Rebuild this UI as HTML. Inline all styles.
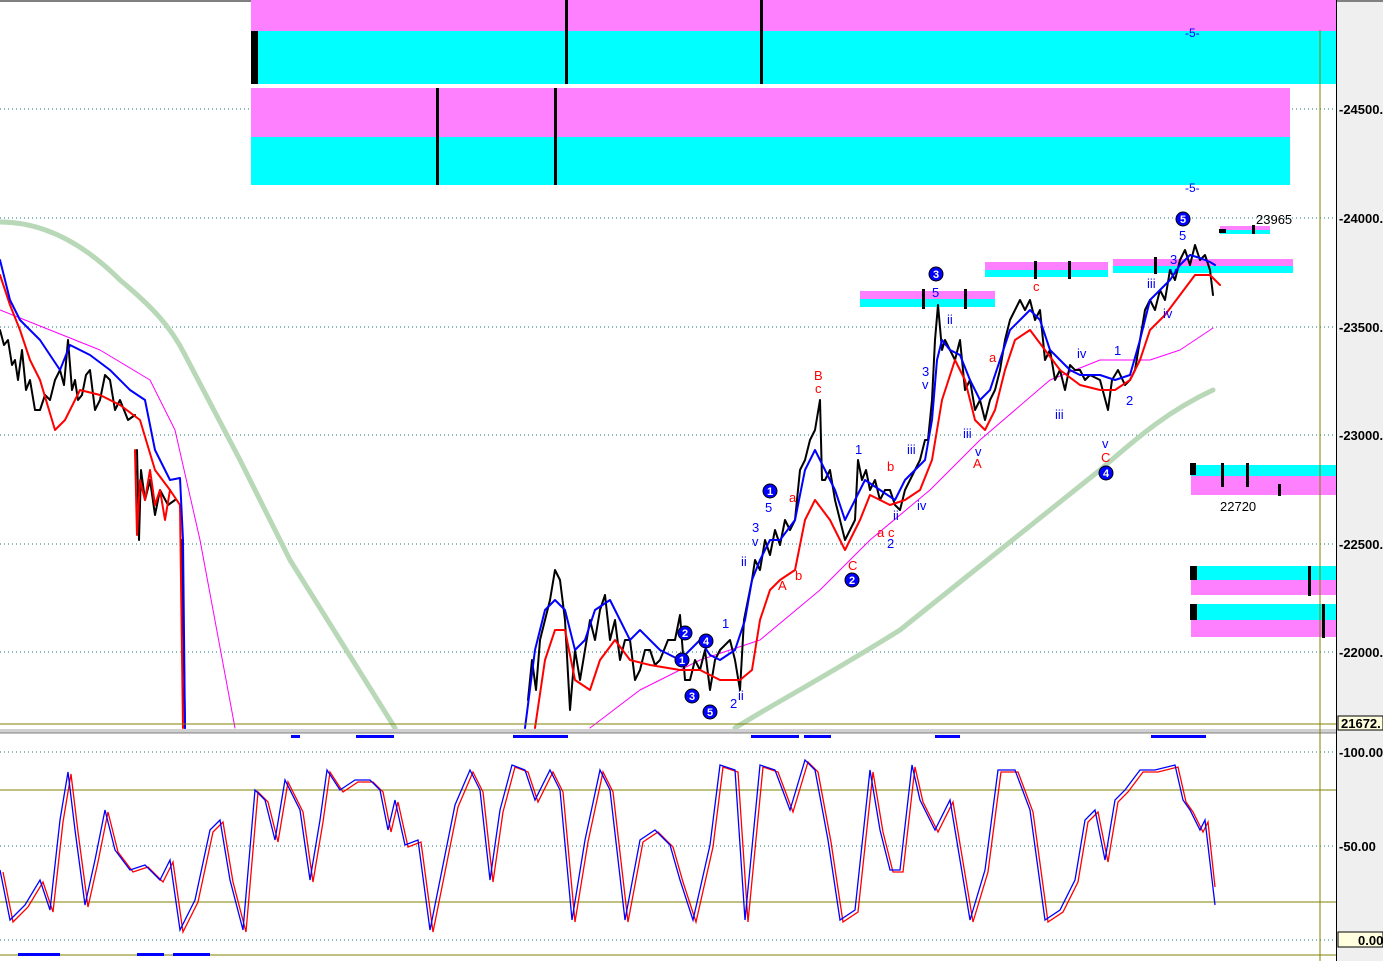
<!DOCTYPE html>
<html><head><meta charset="utf-8"><style>
html,body{margin:0;padding:0;background:#fff;}
svg{display:block;font-family:"Liberation Sans",sans-serif;}
</style></head><body>
<svg width="1383" height="961" viewBox="0 0 1383 961" xmlns="http://www.w3.org/2000/svg">
<rect x="0" y="0" width="1383" height="961" fill="#fff"/>
<rect x="1337" y="0" width="46" height="961" fill="#efefef"/>
<line x1="0" y1="1" x2="1383" y2="1" stroke="#808080" stroke-width="2"/>
<g stroke="#1a7a7a" stroke-width="1" stroke-dasharray="1,3">
<line x1="0" y1="109" x2="1336" y2="109"/><line x1="0" y1="218" x2="1336" y2="218"/>
<line x1="0" y1="327" x2="1336" y2="327"/><line x1="0" y1="435" x2="1336" y2="435"/>
<line x1="0" y1="544" x2="1336" y2="544"/><line x1="0" y1="652" x2="1336" y2="652"/>
<line x1="0" y1="752" x2="1336" y2="752"/><line x1="0" y1="846" x2="1336" y2="846"/>
<line x1="0" y1="940" x2="1336" y2="940"/>
</g>
<rect x="251" y="0" width="1085" height="31" fill="#ff80ff"/>
<rect x="251" y="31" width="1085" height="53" fill="#00ffff"/>
<rect x="251" y="31" width="7" height="53" fill="#000"/>
<rect x="565" y="0" width="3" height="84" fill="#000"/>
<rect x="760" y="0" width="3" height="84" fill="#000"/>
<rect x="251" y="88" width="1039" height="49" fill="#ff80ff"/>
<rect x="251" y="137" width="1039" height="48" fill="#00ffff"/>
<rect x="436" y="88" width="3" height="97" fill="#000"/>
<rect x="554" y="88" width="3" height="97" fill="#000"/>
<text x="1185" y="37" font-size="12" fill="#0000ff">-5-</text>
<text x="1185" y="192" font-size="12" fill="#0000ff">-5-</text>
<rect x="860" y="291" width="135" height="8" fill="#ff80ff"/><rect x="860" y="299" width="135" height="8" fill="#00ffff"/>
<rect x="922" y="289" width="3" height="20" fill="#000"/><rect x="964" y="289" width="3" height="20" fill="#000"/>
<rect x="985" y="262" width="123" height="8" fill="#ff80ff"/><rect x="985" y="270" width="123" height="7" fill="#00ffff"/>
<rect x="1034" y="261" width="3" height="18" fill="#000"/><rect x="1068" y="261" width="3" height="18" fill="#000"/>
<rect x="1113" y="259" width="180" height="7" fill="#ff80ff"/><rect x="1113" y="266" width="180" height="7" fill="#00ffff"/>
<rect x="1154" y="257" width="3" height="17" fill="#000"/>
<rect x="1220" y="226" width="50" height="4" fill="#ff80ff"/><rect x="1220" y="230" width="50" height="4" fill="#00ffff"/>
<rect x="1219" y="229" width="7" height="4" fill="#000"/><rect x="1252" y="225" width="3" height="9" fill="#000"/>
<text x="1256" y="224" font-size="13" fill="#000">23965</text>
<rect x="1191" y="465" width="145" height="11" fill="#00ffff"/><rect x="1191" y="476" width="145" height="19" fill="#ff80ff"/>
<rect x="1190" y="463" width="6" height="12" fill="#000"/><rect x="1221" y="463" width="3" height="24" fill="#000"/><rect x="1246" y="463" width="3" height="24" fill="#000"/><rect x="1278" y="484" width="3" height="12" fill="#000"/>
<text x="1220" y="511" font-size="13" fill="#000">22720</text>
<rect x="1191" y="566" width="145" height="14" fill="#00ffff"/><rect x="1191" y="580" width="145" height="15" fill="#ff80ff"/>
<rect x="1190" y="566" width="7" height="14" fill="#000"/><rect x="1308" y="566" width="3" height="30" fill="#000"/>
<rect x="1191" y="604" width="145" height="16" fill="#00ffff"/><rect x="1191" y="620" width="145" height="17" fill="#ff80ff"/>
<rect x="1190" y="604" width="7" height="16" fill="#000"/><rect x="1322" y="604" width="3" height="34" fill="#000"/>
<g fill="none" stroke-linejoin="round" stroke-linecap="round">
<path d="M0,222 C40,222 80,240 120,280 C150,305 170,325 185,355 L240,460 L290,560 L340,640 L395,728" stroke="#b8d8b8" stroke-width="5"/>
<path d="M735,728 C780,700 820,680 900,630 L1000,550 L1100,470 C1140,435 1170,410 1213,390" stroke="#b8d8b8" stroke-width="5"/>
<path d="M0,310 L50,330 L100,350 L150,380 L175,430 L200,540 L235,728" stroke="#ff00ff" stroke-width="1"/>
<path d="M590,728 L640,690 L700,660 L760,640 L820,590 L870,540 L930,490 L980,440 L1050,380 L1100,360 L1150,360 L1180,350 L1213,328" stroke="#ff00ff" stroke-width="1"/>
<path d="M0,330 L4,345 L8,340 L12,365 L15,360 L18,380 L22,350 L26,390 L30,380 L35,410 L40,410 L45,395 L50,400 L55,380 L60,370 L64,385 L68,340 L72,390 L75,380 L78,400 L82,395 L86,375 L90,370 L95,410 L100,400 L105,375 L110,380 L115,410 L120,400 L128,420 L135,415 M137,450 L139,540 L141,470 L145,500 L150,480 L155,515 L160,490 L168,505 L175,500 M182,540 L185,728 M528,700 L532,660 L536,690 L540,640 L545,620 L550,600 L555,570 L560,580 L565,620 L570,710 L575,650 L580,680 L585,650 L590,620 L595,640 L600,610 L605,595 L610,640 L615,620 L620,660 L625,640 L630,640 L635,680 L640,670 L645,650 L650,650 L655,665 L660,660 L668,640 L675,640 L680,615 L685,680 L690,680 L695,660 L700,670 L705,650 L710,690 L715,660 L720,650 L730,640 L735,660 L740,690 L744,620 L748,600 L752,580 L755,560 L760,570 L765,540 L770,555 L775,530 L780,545 L785,520 L790,530 L795,520 L800,470 L805,460 L810,440 L815,430 L820,400 L822,480 L825,480 L830,470 L835,500 L840,520 L845,540 L850,530 L855,520 L858,460 L862,480 L866,470 L870,490 L875,480 L880,500 L885,490 L890,490 L895,505 L900,510 L905,490 L910,480 L915,470 L920,460 L925,440 L928,440 L932,400 L935,340 L938,305 L942,350 L945,340 L950,350 L955,360 L960,340 L965,390 L970,380 L975,410 L980,400 L985,420 L990,400 L995,390 L1000,370 L1005,340 L1010,320 L1015,310 L1020,300 L1025,310 L1030,300 L1035,320 L1040,310 L1045,360 L1050,350 L1055,380 L1060,370 L1065,390 L1070,365 L1075,370 L1080,370 L1085,380 L1090,375 L1100,380 L1108,410 L1112,380 L1118,370 L1125,385 L1130,380 L1135,370 L1140,340 L1145,310 L1150,300 L1155,310 L1160,290 L1165,300 L1170,270 L1175,280 L1180,260 L1185,250 L1190,265 L1195,245 L1200,260 L1205,255 L1210,270 L1213,295" stroke="#000" stroke-width="2"/>
<path d="M0,275 L10,305 L20,330 L30,360 L40,380 L55,430 L65,420 L80,390 L100,395 L120,405 L140,420 L155,470 L170,490 L180,505 L183,728" stroke="#ff0000" stroke-width="2"/>
<path d="M135,450 L137,535 L140,480 L145,500 L150,470 L155,505 L160,490 L165,520 L170,490" stroke="#ff0000" stroke-width="2"/>
<path d="M535,728 L545,660 L555,630 L565,630 L575,680 L590,690 L600,660 L615,640 L630,660 L650,665 L680,670 L700,670 L720,680 L740,680 L752,670 L760,620 L770,590 L780,580 L795,570 L805,520 L815,500 L830,520 L845,550 L860,520 L870,495 L890,505 L905,500 L920,490 L932,460 L942,400 L955,360 L965,380 L975,420 L985,430 L995,410 L1005,370 L1015,340 L1030,330 L1045,350 L1060,370 L1080,385 L1100,390 L1115,390 L1130,380 L1140,360 L1150,330 L1165,315 L1180,295 L1195,275 L1210,275 L1220,285" stroke="#ff0000" stroke-width="2"/>
<path d="M0,260 L10,300 L20,320 L40,340 L60,370 L70,345 L90,355 L110,370 L130,390 L145,400 L155,450 L170,480 L180,478 L183,540 L185,728" stroke="#0000ff" stroke-width="2"/>
<path d="M525,728 L535,650 L545,610 L555,600 L565,610 L575,650 L585,640 L595,610 L610,600 L620,620 L630,640 L640,630 L650,640 L660,650 L680,660 L690,650 L700,640 L710,655 L720,660 L735,650 L745,620 L752,580 L760,560 L770,540 L780,540 L795,520 L805,470 L815,450 L825,470 L835,490 L845,520 L855,500 L865,480 L880,490 L895,500 L905,480 L915,470 L925,460 L932,420 L937,360 L942,340 L950,350 L960,355 L970,380 L980,400 L990,390 L1000,360 L1010,330 L1020,320 L1030,310 L1040,320 L1050,350 L1060,360 L1070,370 L1080,375 L1100,375 L1115,380 L1130,375 L1140,340 L1150,300 L1160,290 L1170,280 L1180,265 L1190,255 L1200,258 L1210,262 L1215,265" stroke="#0000ff" stroke-width="2"/>
</g>
<g font-size="13" fill="#0000ff">
<text x="765" y="512">5</text><text x="752" y="532">3</text><text x="752" y="546">v</text><text x="741" y="566">ii</text>
<text x="855" y="454">1</text><text x="907" y="454">iii</text><text x="917" y="510">iv</text><text x="893" y="520">ii</text><text x="887" y="548">2</text>
<text x="932" y="297">5</text><text x="922" y="376">3</text><text x="922" y="389">v</text><text x="947" y="324">ii</text><text x="963" y="438">iii</text><text x="975" y="456">v</text>
<text x="1077" y="358">iv</text><text x="1055" y="419">iii</text><text x="1114" y="355">1</text><text x="1126" y="405">2</text><text x="1102" y="448">v</text>
<text x="1147" y="288">iii</text><text x="1163" y="318">iv</text><text x="1170" y="264">3</text><text x="1170" y="276">v</text><text x="1179" y="240">5</text>
<text x="722" y="628">1</text><text x="730" y="708">2</text><text x="738" y="700">ii</text>
</g>
<g font-size="13" fill="#ff0000">
<text x="814" y="380">B</text><text x="815" y="393">c</text><text x="789" y="502">a</text><text x="795" y="580">b</text><text x="778" y="590">A</text>
<text x="848" y="570">C</text><text x="877" y="537">a</text><text x="888" y="537">c</text><text x="887" y="471">b</text>
<text x="973" y="468">A</text><text x="989" y="362">a</text><text x="1033" y="291">c</text><text x="1101" y="462">C</text>
</g>
<g fill="#0000ff" stroke="#000" stroke-width="1">
<circle cx="770" cy="491" r="7"/><circle cx="852" cy="580" r="7"/><circle cx="936" cy="274" r="7"/><circle cx="1106" cy="473" r="7"/><circle cx="1183" cy="219" r="7"/>
<circle cx="685" cy="633" r="7"/><circle cx="706" cy="641" r="7"/><circle cx="682" cy="660" r="7"/><circle cx="692" cy="696" r="7"/><circle cx="710" cy="712" r="7"/>
</g>
<g font-size="11" font-weight="bold" fill="#fff" text-anchor="middle">
<text x="770" y="495">1</text><text x="852" y="584">2</text><text x="936" y="278">3</text><text x="1106" y="477">4</text><text x="1183" y="223">5</text>
<text x="685" y="637">2</text><text x="706" y="645">4</text><text x="682" y="664">1</text><text x="692" y="700">3</text><text x="710" y="716">5</text>
</g>
<line x1="0" y1="724" x2="1336" y2="724" stroke="#808000" stroke-width="1"/>
<rect x="0" y="729" width="1336" height="4" fill="#d0d0d0"/>
<line x1="0" y1="733" x2="1336" y2="733" stroke="#808080"/>
<rect x="1338" y="716" width="45" height="14" fill="#ffffe0" stroke="#000"/>
<text x="1341" y="728" font-size="13" font-weight="bold" fill="#000">21672.</text>
<line x1="1320" y1="30" x2="1320" y2="961" stroke="#808000"/>
<line x1="1336.5" y1="0" x2="1336.5" y2="961" stroke="#000"/>
<g font-size="13" font-weight="bold" fill="#000">
<text x="1339" y="114">-24500.</text><text x="1339" y="223">-24000.</text><text x="1339" y="332">-23500.</text>
<text x="1339" y="440">-23000.</text><text x="1339" y="549">-22500.</text><text x="1339" y="657">-22000.</text>
<text x="1339" y="757">-100.00</text><text x="1339" y="851">-50.00</text>
</g>
<rect x="1338" y="932" width="45" height="15" fill="#ffffe0" stroke="#000"/>
<text x="1358" y="945" font-size="13" font-weight="bold" fill="#000">0.00</text>
<line x1="0" y1="790" x2="1336" y2="790" stroke="#808000"/>
<line x1="0" y1="902" x2="1336" y2="902" stroke="#808000"/>
<line x1="0" y1="955" x2="1336" y2="955" stroke="#808000"/>
<g fill="#0000ff">
<rect x="291" y="735" width="9" height="3"/><rect x="356" y="735" width="38" height="3"/><rect x="513" y="735" width="55" height="3"/>
<rect x="751" y="735" width="48" height="3"/><rect x="804" y="735" width="27" height="3"/><rect x="935" y="735" width="25" height="3"/><rect x="1151" y="735" width="55" height="3"/>
<rect x="18" y="953" width="42" height="3"/><rect x="137" y="953" width="27" height="3"/><rect x="173" y="953" width="37" height="3"/>
</g>
<g fill="none" stroke-width="1.3">
<path transform="translate(3,2)" stroke="#ff0000" d="M0,870 L10,920 L25,905 L40,880 L50,910 L60,820 L68,772 L75,830 L85,905 L95,860 L105,810 L115,850 L130,870 L145,865 L160,880 L170,860 L180,930 L195,900 L210,830 L220,820 L230,880 L243,930 L255,790 L265,800 L275,840 L285,780 L300,810 L310,880 L320,820 L327,770 L340,790 L355,780 L370,780 L380,790 L388,830 L395,800 L405,845 L418,840 L430,930 L440,880 L455,805 L470,770 L480,790 L490,880 L500,810 L512,765 L525,770 L535,800 L550,770 L560,790 L572,920 L585,840 L600,770 L610,790 L625,920 L640,840 L655,830 L670,845 L680,880 L693,920 L710,845 L720,765 L735,770 L745,920 L760,765 L775,770 L790,810 L805,760 L815,770 L828,840 L840,920 L855,910 L870,770 L880,830 L890,870 L900,870 L912,765 L920,800 L935,830 L950,800 L970,920 L985,870 L998,770 L1015,770 L1030,810 L1045,920 L1060,910 L1075,880 L1085,820 L1095,810 L1105,860 L1115,800 L1125,790 L1140,770 L1155,770 L1175,765 L1183,800 L1190,810 L1200,830 L1205,820 L1212,885"/>
<path stroke="#0000ff" d="M0,870 L10,920 L25,905 L40,880 L50,910 L60,820 L68,772 L75,830 L85,905 L95,860 L105,810 L115,850 L130,870 L145,865 L160,880 L170,860 L180,930 L195,900 L210,830 L220,820 L230,880 L243,930 L255,790 L265,800 L275,840 L285,780 L300,810 L310,880 L320,820 L327,770 L340,790 L355,780 L370,780 L380,790 L388,830 L395,800 L405,845 L418,840 L430,930 L440,880 L455,805 L470,770 L480,790 L490,880 L500,810 L512,765 L525,770 L535,800 L550,770 L560,790 L572,920 L585,840 L600,770 L610,790 L625,920 L640,840 L655,830 L670,845 L680,880 L693,920 L710,845 L720,765 L735,770 L745,920 L760,765 L775,770 L790,810 L805,760 L815,770 L828,840 L840,920 L855,910 L870,770 L880,830 L890,870 L900,870 L912,765 L920,800 L935,830 L950,800 L970,920 L985,870 L998,770 L1015,770 L1030,810 L1045,920 L1060,910 L1075,880 L1085,820 L1095,810 L1105,860 L1115,800 L1125,790 L1140,770 L1155,770 L1175,765 L1183,800 L1190,810 L1200,830 L1205,820 L1215,905"/>
</g>
</svg>
</body></html>
